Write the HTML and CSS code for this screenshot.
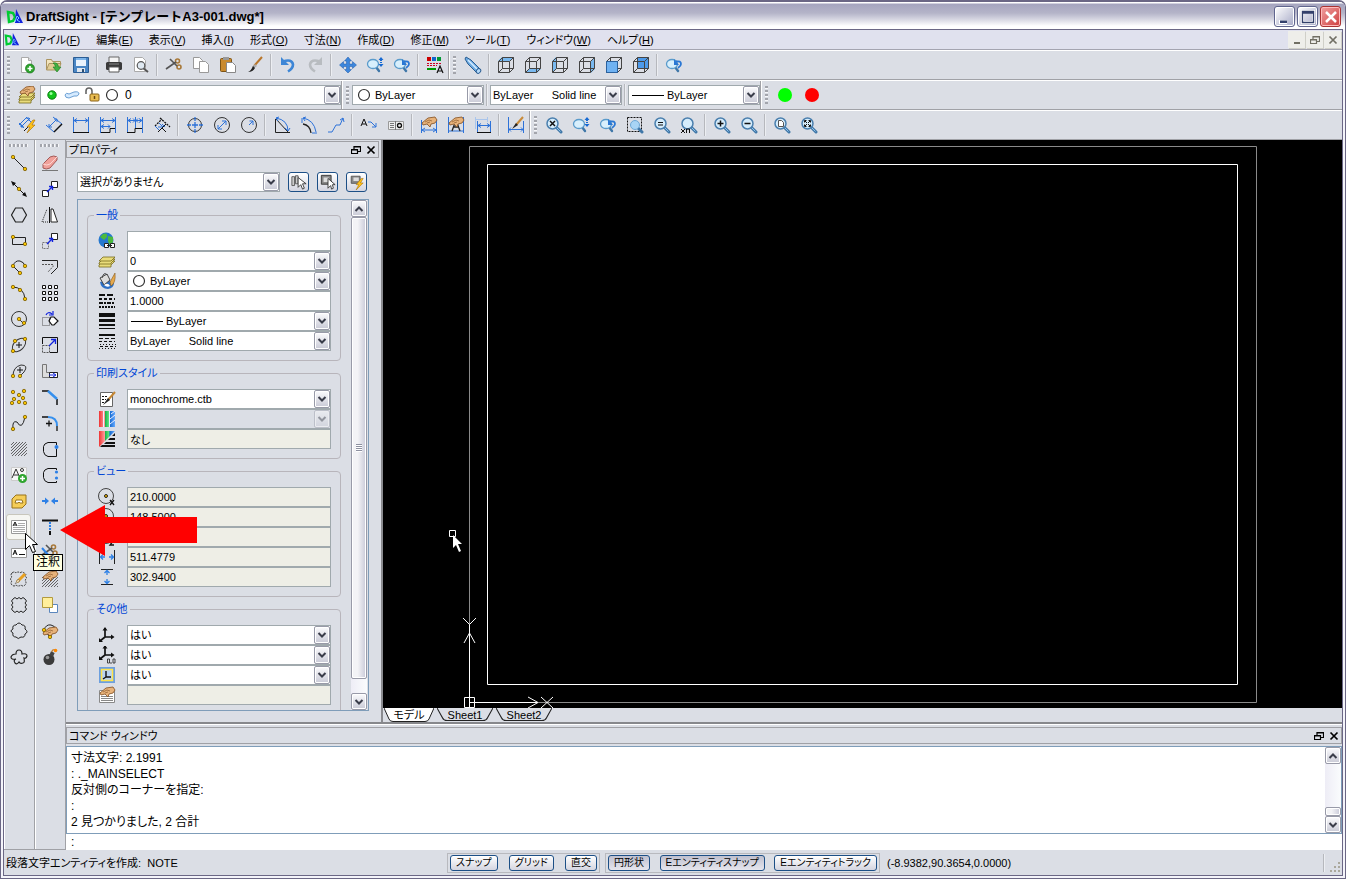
FILE: index.html
```html
<!DOCTYPE html>
<html lang="ja">
<head>
<meta charset="utf-8">
<title>DraftSight - [テンプレートA3-001.dwg*]</title>
<link rel="stylesheet" href="styles.css">
</head>
<body>
<svg class="sprite" aria-hidden="true">
<defs>
<pattern id="hatch" width="3" height="3" patternUnits="userSpaceOnUse"><path d="M0 3L3 0M-1 1L1 -1M2 4L4 2" stroke="#444" stroke-width=".8"/></pattern>
<linearGradient id="rainbow"><stop offset="0" stop-color="#e33"/><stop offset=".35" stop-color="#f99"/><stop offset=".36" stop-color="#1a4"/><stop offset=".65" stop-color="#6e8"/><stop offset=".66" stop-color="#16c"/><stop offset="1" stop-color="#6af"/></linearGradient>
<circle id="yd" r="1.7" fill="#f8c400" stroke="#7a5c00" stroke-width=".8"/>
<g id="mag"><path d="M11 11l5 5" stroke="#3f77a8" stroke-width="3" stroke-linecap="round"/><path d="M11.5 11.5l4 4" stroke="#8fc3ea" stroke-width="1"/><circle cx="7.5" cy="7.5" r="5.5" fill="#d5ecfb" stroke="#4a7fae" stroke-width="1.5"/></g>
<g id="magsmall"><path d="M10 11l3 4" stroke="#3f77a8" stroke-width="2.4" stroke-linecap="round"/><ellipse cx="7" cy="8" rx="5.500" ry="4.500" fill="#d8effc" stroke="#5a9bcb" stroke-width="1.3"/></g>
<g id="cube" fill="none" stroke="#444"><path d="M1.500 5.500h11v11h-11zM5.500 1.500h11v11h-11zM1.500 5.500l4-4M12.500 5.500l4-4M12.500 16.500l4-4M1.500 16.500l4-4"/></g>
<g id="hand"><path d="M2 8l6-5 7-1 2 3-2 3-4 1-1 3-3-3-4 1z" fill="#e7b27a" stroke="#8c5a2c" stroke-width=".9"/><path d="M5 7l4-2 3 1M7 8l3-1" stroke="#8c5a2c" stroke-width=".7" fill="none"/></g>
<g id="scis"><circle cx="12.500" cy="5" r="2" fill="none" stroke="#a87838" stroke-width="1.600"/><circle cx="14" cy="11" r="2" fill="none" stroke="#a87838" stroke-width="1.600"/><path d="M11 6L1 13M12 10L5 3" stroke="#555" stroke-width="1.600"/></g>
<path id="bolt" d="M14 3L8 10h3l-3 6 8-8h-3l3-5z" fill="#ffc21a" stroke="#a36a00" stroke-width=".6"/>
<g id="axes" fill="none" stroke="#111" stroke-width="1.700"><path d="M7 2v9h8M7 11l-5 4"/><path d="M4.500 4.500L7 1l2.500 3.500zM13 8.500l3.500 2.500-3.500 2.500zM1 12v4h4z" fill="#111" stroke="none"/></g>
<symbol id="logo" viewBox="0 0 18 18"><path d="M2 4l5 1 2 4-2 4-4 1z" fill="none" stroke="#0c3" stroke-width="2.500"/><path d="M10 1l7 14H9z" fill="#12d"/><path d="M9 14l2-6 2 2-2 2 3 2" stroke="#7cf" fill="none"/></symbol>
<symbol id="new" viewBox="0 0 18 18"><path d="M3.500 1.500h7l3 3v12h-10z" fill="#fff" stroke="#aaa"/><path d="M10.500 1.500v3h3" fill="#ddd" stroke="#aaa"/><circle cx="12" cy="12.500" r="4.500" fill="#2fa52f" stroke="#17761a" stroke-width=".7"/><path d="M12 10v5M9.500 12.500h5" stroke="#fff" stroke-width="1.600"/></symbol>
<symbol id="open" viewBox="0 0 18 18"><path d="M1.500 14V3.500h5l1 2h8v3" fill="#f2e4bd" stroke="#ab9460"/><path d="M1.500 14L4 7.500h12L13.500 14z" fill="#e2cd95" stroke="#ab9460"/><path d="M8 7q5-1 5.500 4h2.500l-4 5-4-5h2.500q-.5-3-2.500-4z" fill="#43b243" stroke="#1b7a1e" stroke-width=".6"/></symbol>
<symbol id="save" viewBox="0 0 18 18"><path d="M1.500 1.500h15v15h-15z" fill="#4a86c4" stroke="#2b5d94"/><path d="M4 2h10v8H4z" fill="#eaf3fc"/><path d="M4 2h10v2H4z" fill="#7db5ea"/><path d="M5 12h8v4H5z" fill="#dfe6ee"/><path d="M10 13h2v3h-2z" fill="#2f4f70"/></symbol>
<symbol id="print" viewBox="0 0 18 18"><path d="M4 1h10v6H4z" fill="#f4f4f4" stroke="#666"/><rect x="1" y="6" width="16" height="8" rx="1.500" fill="#3a3a3a"/><path d="M4 8h10" stroke="#888"/><path d="M4 11h10v5H4z" fill="#fff" stroke="#555"/></symbol>
<symbol id="preview" viewBox="0 0 18 18"><path d="M2.500 1.500h8l3 3v11h-11z" fill="#fff" stroke="#aaa"/><path d="M11 12l5 4" stroke="#555" stroke-width="2"/><circle cx="9" cy="9.500" r="3.800" fill="#dfe9f2" stroke="#555" stroke-width="1.200"/></symbol>
<symbol id="cut" viewBox="0 0 18 18"><use href="#scis"/></symbol>
<symbol id="copy" viewBox="0 0 18 18"><g fill="#fff" stroke="#999"><path d="M1.500 1.500h6l3 3v8h-9z"/><path d="M7.500 5.500h6l3 3v8h-9z"/></g></symbol>
<symbol id="paste" viewBox="0 0 18 18"><rect x="1.500" y="2.500" width="11" height="13" rx="1" fill="#c98a2e" stroke="#7c5315"/><path d="M4 1h6v3H4z" fill="#999"/><path d="M7.500 6.500h6l3 3v7h-9z" fill="#fff" stroke="#888"/></symbol>
<symbol id="brush" viewBox="0 0 18 18"><path d="M16 1L8 10" stroke="#b9762a" stroke-width="2"/><path d="M9 8l-3 3 1 2 4-3z" fill="#aaa"/><path d="M7 10l2 2q-2 4-7 4 3-1 5-6z" fill="#222"/></symbol>
<symbol id="undo" viewBox="0 0 18 18"><path d="M4 5.500q9-3 10 3 0 4-5 7" fill="none" stroke="#3d86d6" stroke-width="2.600"/><path d="M2 1v8h8z" fill="#3d86d6"/></symbol>
<symbol id="redo" viewBox="0 0 18 18"><path d="M14 5.500q-9-3-10 3 0 4 5 7" fill="none" stroke="#b8bcc0" stroke-width="2.600"/><path d="M16 1v8H8z" fill="#b8bcc0"/></symbol>
<symbol id="pan" viewBox="0 0 18 18"><path d="M9 1l3.500 4h-2v3h3V5.500L17.500 9l-4 3.500v-2h-3v3h2L9 17l-3.500-3.500h2v-3h-3v2L.5 9l4-3.500V8h3V5h-2z" fill="#3c86dc" stroke="#1c58a8" stroke-width=".5"/></symbol>
<symbol id="zdyn" viewBox="0 0 18 18"><use href="#magsmall"/><path d="M15 1l2.500 3h-5zM15 11l2.500-3h-5z" fill="#1769d2"/><path d="M15 4v4" stroke="#1769d2" stroke-dasharray="1 1" stroke-width="2"/></symbol>
<symbol id="zprev" viewBox="0 0 18 18"><use href="#magsmall"/><path d="M11 5.500q5-1 5 2.500 0 2-3 4" fill="none" stroke="#2a77d4" stroke-width="1.800"/><path d="M9 3v6h5z" fill="#2a77d4"/></symbol>
<symbol id="fmt" viewBox="0 0 18 18"><path d="M1 1h4v4H1z" fill="#c00"/><path d="M6 1h4v4H6z" fill="#16c"/><path d="M11 1h4v4h-4z" fill="#093"/><path d="M1 7.500h14M1 9.500h10" stroke="#c02" stroke-dasharray="2 1"/><path d="M1 13h9" stroke="#090" stroke-width="2"/><path d="M11 17l3-7 3 7M12 15h4" fill="none" stroke="#111" stroke-width="1.200"/></symbol>
<symbol id="scope" viewBox="0 0 18 18"><path d="M2 1l5 3 9 9-3 4-9-9-3-5z" fill="#6cabe2" stroke="#2a5d92"/><path d="M4 4l9 9" stroke="#d6ecff" stroke-width="1.500"/><ellipse cx="14.500" cy="15" rx="2" ry="2.500" fill="#b5dafa" stroke="#2a5d92" transform="rotate(40 14.500 15)"/></symbol>
<symbol id="c1" viewBox="0 0 18 18"><path d="M1 5l4-4h12l-4 4z" fill="#79b9f0"/><use href="#cube"/></symbol>
<symbol id="c2" viewBox="0 0 18 18"><path d="M1 17l4-4h12l-4 4z" fill="#79b9f0"/><use href="#cube"/></symbol>
<symbol id="c3" viewBox="0 0 18 18"><path d="M1 5l4-4v12l-4 4z" fill="#79b9f0"/><use href="#cube"/></symbol>
<symbol id="c4" viewBox="0 0 18 18"><path d="M13 5l4-4v12l-4 4z" fill="#79b9f0"/><use href="#cube"/></symbol>
<symbol id="c5" viewBox="0 0 18 18"><use href="#cube"/><path d="M1.500 5.500h11v11h-11z" fill="#6fb2f2" stroke="#2a62a0"/></symbol>
<symbol id="c6" viewBox="0 0 18 18"><path d="M5 1h12v12H5z" fill="#4d9aea"/><use href="#cube"/></symbol>
<symbol id="layers" viewBox="0 0 18 18"><g fill="#e9dc7c" stroke="#776a1c" stroke-width=".8"><path d="M1 15l4-4h12l-4 4v2H1z"/><path d="M1 13l4-4h12l-4 4v1H1z"/><path d="M1 11l4-4h12l-4 4z"/></g></symbol>
<symbol id="layman" viewBox="0 0 18 18"><use href="#layers"/><use href="#hand" y="-2"/></symbol>
<symbol id="layer3" viewBox="0 0 18 18"><use href="#layers" y="-2"/></symbol>
<symbol id="green" viewBox="0 0 18 18"><circle cx="9" cy="9" r="4.200" fill="#11c51a" stroke="#0a7d10"/><circle cx="8" cy="7.500" r="1.500" fill="#9f9"/></symbol>
<symbol id="cloud" viewBox="0 0 18 18"><path d="M2 9q1-3 4-1l5-2q5-1 5 2-1 3-5 2l-5 2q-4 0-4-3z" fill="#d6ebff" stroke="#6da0d4"/></symbol>
<symbol id="lock" viewBox="0 0 18 18"><path d="M3 8V5q0-3 3-3t3 3v4" fill="none" stroke="#666" stroke-width="1.600"/><rect x="7" y="8" width="9" height="7" rx="1" fill="#e9bd52" stroke="#8b641a"/><path d="M11.500 10v3" stroke="#6b4912" stroke-width="1.500"/></symbol>
<symbol id="ring" viewBox="0 0 18 18"><circle cx="9" cy="9" r="5.500" fill="#fff" stroke="#333" stroke-width="1.200"/></symbol>
<symbol id="g" viewBox="0 0 18 18"><circle cx="9" cy="9" r="7" fill="#0f0"/></symbol>
<symbol id="r" viewBox="0 0 18 18"><circle cx="9" cy="9" r="7" fill="#f00"/></symbol>
<g id="dh" fill="none" stroke="#2d72d9"><path d="M1.500 1v16M16.500 1v16M2 4.500h14M5 2.500l-3 2 3 2M13 2.500l3 2-3 2"/></g>
<symbol id="d1" viewBox="0 0 18 18"><path d="M1 9l8-8M3 11L12 2M1 7l5 5M8 1l5 5M3 8v3h3M8 2h3v3" fill="none" stroke="#2d72d9"/><path d="M6 15l4-4" stroke="#111"/><use href="#bolt" x="1" y="1"/></symbol>
<symbol id="d2" viewBox="0 0 18 18"><path d="M1 9l8 7M8 1l9 7M4 11l8-8M4 8v3h3M9 3h3v3" fill="none" stroke="#2d72d9"/><path d="M9 16l8-8" stroke="#111" stroke-width="1.500"/></symbol>
<symbol id="d3" viewBox="0 0 18 18"><use href="#dh"/><path d="M1 16.500h16" stroke="#111"/></symbol>
<symbol id="d4" viewBox="0 0 18 18"><use href="#dh"/><path d="M2 10.500h9M5 8.500l-3 2 3 2M9 8.500l2 2-2 2" stroke="#2d72d9" fill="none"/><path d="M2 16.500h9v-4h5" stroke="#111" fill="none"/></symbol>
<symbol id="d5" viewBox="0 0 18 18"><use href="#dh"/><path d="M9.500 1v12M7 2.500l2 2-2 2M12 2.500l-2 2 2 2" stroke="#2d72d9" fill="none"/><path d="M1 16.500h8v-4h7" stroke="#111" fill="none"/></symbol>
<symbol id="d6" viewBox="0 0 18 18"><path d="M2 10l7-7M7 2l10 9" fill="none" stroke="#111" stroke-width="1.300" stroke-dasharray="2 1"/><path d="M2 10l4 4M6 7l4 4M5 11h4M9 8l3 3" fill="none" stroke="#2d72d9"/><path d="M5 16l4-4 4 4M9 12l4-4" stroke="#111" fill="none"/></symbol>
<symbol id="d7" viewBox="0 0 18 18"><circle cx="9" cy="9" r="6.500" fill="none" stroke="#333"/><path d="M9 1v4M9 13v4M1 9h4M13 9h4M6 9h6M9 6v6" stroke="#2d72d9" stroke-width="1.300"/></symbol>
<symbol id="d8" viewBox="0 0 18 18"><circle cx="9" cy="9" r="7.500" fill="none" stroke="#333"/><path d="M5 13l8-8M5 9v4h4M9 5h4v4" stroke="#2d72d9" fill="none"/></symbol>
<symbol id="d9" viewBox="0 0 18 18"><circle cx="9" cy="9" r="7.500" fill="none" stroke="#333"/><path d="M9 9l4-4M9.500 5H13v4" stroke="#2d72d9" fill="none"/></symbol>
<symbol id="d10" viewBox="0 0 18 18"><path d="M2.500 3v13.500H17M3 3l12 13" fill="none" stroke="#222"/><path d="M3 2q12 2 12 13M6 1L3 2l2 3M12 12l3 3 2-3" fill="none" stroke="#2d72d9"/></symbol>
<symbol id="d11" viewBox="0 0 18 18"><path d="M3 8q7 1 8 9" fill="none" stroke="#222" stroke-width="1.300"/><path d="M2 7V2M12 17h5M3 2q11 2 13 14M6 1L3 2l2 3" fill="none" stroke="#2d72d9"/></symbol>
<symbol id="d12" viewBox="0 0 18 18"><path d="M1 16h4l4-7h4l3-7M13 4l3-2 1 4" fill="none" stroke="#2d72d9"/></symbol>
<symbol id="d13" viewBox="0 0 18 18"><path d="M1 10l3-7 3 7M2 8h4" fill="none" stroke="#111"/><path d="M8 6h3l5 5M16 7v4h-4" fill="none" stroke="#2d72d9"/></symbol>
<symbol id="d14" viewBox="0 0 18 18"><path d="M1.500 5.500h15v8h-15z" fill="#eee" stroke="#999"/><path d="M3 7.500h4M3 9.500h4M3 11.500h4M8.500 5v9" stroke="#777"/><circle cx="12.500" cy="9.500" r="2" fill="none" stroke="#111" stroke-width="1.300"/></symbol>
<symbol id="d15" viewBox="0 0 18 18"><path d="M1.500 4v13M16.500 4v13M2 14h14M5 12l-3 2 3 2M13 12l3 2-3 2" fill="none" stroke="#2d72d9"/><use href="#hand" y="-1"/></symbol>
<symbol id="d16" viewBox="0 0 18 18"><path d="M1.500 1v16M16.500 1v16M2 15h14" fill="none" stroke="#2d72d9"/><path d="M5 15l4-11 4 11M6 11h6" fill="none" stroke="#222" stroke-width="1.300"/><use href="#hand" y="-1"/></symbol>
<symbol id="d17" viewBox="0 0 18 18"><path d="M1.500 1v12M13.500 1v5M2 3.500h11" stroke="#a9c5ec"/><path d="M3.500 5v12M16.500 5v12M4 9.500h12M7 7.500l-3 2 3 2M13 7.500l3 2-3 2" fill="none" stroke="#2d72d9"/><path d="M3 16.500h14" stroke="#111"/></symbol>
<symbol id="d18" viewBox="0 0 18 18"><path d="M1.500 1v16M16.500 5v12M2 13.500h14M4 11.500l-2 2 2 2M14 11.500l2 2-2 2" fill="none" stroke="#2d72d9"/><path d="M16 1l-7 8" stroke="#c98b3a" stroke-width="2"/><path d="M9 7l2 2-6 4z" fill="#222"/></symbol>
<symbol id="z1" viewBox="0 0 18 18"><use href="#mag"/><path d="M5 5l5 5M10 5l-5 5" stroke="#111" stroke-width="1.500"/></symbol>
<symbol id="z2" viewBox="0 0 18 18"><path d="M1.500 1.500h14v14h-14z" fill="none" stroke="#111" stroke-dasharray="2 1"/><path d="M12 12l4 4" stroke="#3f77a8" stroke-width="3" stroke-linecap="round"/><circle cx="9" cy="9" r="4.500" fill="#a8d4f5" stroke="#6ea8d6"/></symbol>
<symbol id="z3" viewBox="0 0 18 18"><use href="#mag"/><path d="M5 6.500h5M5 9h5" stroke="#111" stroke-width="1.200"/></symbol>
<symbol id="z4" viewBox="0 0 18 18"><use href="#mag"/><path d="M1 13l4 4M5 13l-4 4M6.500 17v-4h3v4" fill="none" stroke="#111"/></symbol>
<symbol id="z5" viewBox="0 0 18 18"><use href="#mag"/><path d="M7.500 4.500v6M4.500 7.500h6" stroke="#111" stroke-width="1.500"/></symbol>
<symbol id="z6" viewBox="0 0 18 18"><use href="#mag"/><path d="M4.500 7.500h6" stroke="#111" stroke-width="1.500"/></symbol>
<symbol id="z7" viewBox="0 0 18 18"><use href="#mag"/><path d="M5.500 4.500h3l2 2v4h-5z" fill="#fff" stroke="#555"/></symbol>
<symbol id="z8" viewBox="0 0 18 18"><use href="#mag"/><path d="M4.500 6.500v-2h2M8.500 4.500h2v2M10.500 8.500v2h-2M6.500 10.500h-2v-2M5 5l2 2M10 5L8 7M5 10l2-2M10 10L8 8" fill="none" stroke="#111"/></symbol>
<symbol id="p1" viewBox="0 0 18 18"><path d="M3 3l12 12" stroke="#222"/><use href="#yd" x="3" y="3"/><use href="#yd" x="15" y="15"/></symbol>
<symbol id="p2" viewBox="0 0 18 18"><path d="M2 2l14 14" stroke="#111"/><path d="M1 1l5 2-3 3zM17 17l-5-2 3-3z" fill="#111"/><use href="#yd" x="9" y="9"/></symbol>
<symbol id="p3" viewBox="0 0 18 18"><path d="M5.500 2h7l4 7-4 7h-7l-4-7z" fill="none" stroke="#222" stroke-width="1.200"/></symbol>
<symbol id="p4" viewBox="0 0 18 18"><path d="M2.500 5.500h13v7h-13z" fill="none" stroke="#222"/><use href="#yd" x="3" y="5"/><use href="#yd" x="15" y="12"/></symbol>
<symbol id="p5" viewBox="0 0 18 18"><path d="M10 15L3 8q2-6 7-5 4 1 5 5" fill="none" stroke="#222"/><use href="#yd" x="3" y="8"/><use href="#yd" x="15" y="8"/><use href="#yd" x="10" y="15"/></symbol>
<symbol id="p6" viewBox="0 0 18 18"><path d="M2 3q12 0 13 12" fill="none" stroke="#222"/><use href="#yd" x="3" y="3"/><use href="#yd" x="10" y="6"/><use href="#yd" x="15" y="15"/></symbol>
<symbol id="p7" viewBox="0 0 18 18"><circle cx="9" cy="9" r="7.500" fill="none" stroke="#333"/><path d="M9 9l4 4" stroke="#333"/><use href="#yd" x="9" y="9"/><use href="#yd" x="14" y="13"/></symbol>
<symbol id="p8" viewBox="0 0 18 18"><ellipse cx="9" cy="9" rx="8" ry="5" fill="none" stroke="#333" transform="rotate(-45 9 9)"/><path d="M9 6v6M6 9h6" stroke="#111"/><use href="#yd" x="5" y="5"/><use href="#yd" x="15" y="3"/><use href="#yd" x="3" y="15"/></symbol>
<symbol id="p9" viewBox="0 0 18 18"><path d="M3 14Q3 5 11 3q8 0 3 7l-4 4" fill="none" stroke="#333"/><path d="M10 5v6M7 8h6" stroke="#111"/><use href="#yd" x="3" y="14"/><use href="#yd" x="10" y="14"/></symbol>
<symbol id="p10" viewBox="0 0 18 18"><use href="#yd" x="3" y="4"/><use href="#yd" x="9" y="7"/><use href="#yd" x="14" y="3"/><use href="#yd" x="4" y="11"/><use href="#yd" x="13" y="10"/><use href="#yd" x="2" y="15"/><use href="#yd" x="9" y="14"/><use href="#yd" x="15" y="15"/></symbol>
<symbol id="p11" viewBox="0 0 18 18"><path d="M3 15q-1-9 4-7 5 9 8-5" fill="none" stroke="#222"/><use href="#yd" x="3" y="15"/><use href="#yd" x="15" y="3"/></symbol>
<symbol id="p12" viewBox="0 0 18 18"><path d="M1 2h16v14H1z" fill="url(#hatch)"/></symbol>
<symbol id="p13" viewBox="0 0 18 18"><path d="M1.500 1.500h15v13h-15z" fill="#f7f7f7" stroke="#ccc"/><path d="M2 12L6 3l4 9M3.500 9h5" fill="none" stroke="#333"/><circle cx="12" cy="4" r="1.500" fill="none" stroke="#333"/><circle cx="12.500" cy="12.500" r="4.500" fill="#2fa52f"/><path d="M12.500 10v5M10 12.500h5" stroke="#fff" stroke-width="1.500"/></symbol>
<symbol id="p14" viewBox="0 0 18 18"><path d="M2 7l4-4h10v9l-4 4H2z" fill="#f5cd57" stroke="#98731a"/><path d="M5 11l1-3h6l1 3h-3l-1-1-1 1z" fill="#fff" stroke="#98731a"/></symbol>
<symbol id="p15" viewBox="0 0 18 18"><path d="M1.500 2.500h15v13h-15z" fill="#fff" stroke="#999"/><path d="M3 8l2-4 2 4M4 7h2" fill="none" stroke="#111"/><path d="M8 5.500h7M8 7.500h7M3 9.500h12M3 11.500h12M3 13.500h12" stroke="#aaa"/></symbol>
<symbol id="p16" viewBox="0 0 18 18"><path d="M1.500 4.500h15v9h-15z" fill="#fff" stroke="#999"/><path d="M3 11l2-5 2 5M4 9h2M9 10.500h6" fill="none" stroke="#111"/></symbol>
<symbol id="p17" viewBox="0 0 18 18"><path d="M2 3q2-2 4 0 2-2 4 0 2-2 4 0 3 1 1 3 3 2 0 4 2 3 0 5-2 2-4 0-3 2-5 0-2 2-4 0-2-2 0-4-3-2 0-4-2-2 0-4z" fill="none" stroke="#333" stroke-dasharray="2 1"/><path d="M15 4l-8 8" stroke="#e8a020" stroke-width="3"/><path d="M8 9l2 2-5 3z" fill="#f7deb0" stroke="#555" stroke-width=".5"/></symbol>
<symbol id="p18" viewBox="0 0 18 18"><path d="M3 3q2-3 4 0 2-3 4 0 2-3 4 0 3 2 0 4 3 2 0 4 3 2 0 4-2 3-4 0-2 3-4 0-2 3-4 0-3-2 0-4-3-2 0-4-3-2 0-4z" fill="none" stroke="#222"/></symbol>
<symbol id="p19" viewBox="0 0 18 18"><path d="M6 3q3-4 6 0 4 0 3 4 4 3 0 5 0 4-4 3-3 3-5 0-4 0-3-4-4-2 0-4-1-4 3-4z" fill="none" stroke="#222"/></symbol>
<symbol id="p20" viewBox="0 0 18 18"><path d="M6 6q0-4 3-4t3 4q5-1 5 2-1 3-3 2 1 5-1 5-3 1-4-1-2 3-4 1-2-3 1-4-5 1-5-2 1-3 5-3z" fill="none" stroke="#222" stroke-width="1.200"/></symbol>
<symbol id="m1" viewBox="0 0 18 18"><path d="M2 10l7-7q4-2 7 0v3l-7 8q-4 2-7 0z" fill="#f0a09a" stroke="#a35a58"/><path d="M2 10q4 2 7 0l7-7" fill="none" stroke="#fcd5d2"/><path d="M1 16.500h16" stroke="#777"/></symbol>
<symbol id="m2" viewBox="0 0 18 18"><path d="M1.500 10.500h6v6h-6zM10.500 1.500h6v6h-6z" fill="#fff" stroke="#222"/><path d="M6 12l5-5M8 6.500h3.500V10" stroke="#12d" stroke-width="1.400" fill="none"/></symbol>
<symbol id="m3" viewBox="0 0 18 18"><path d="M7 16H1L6 3" fill="none" stroke="#222" stroke-dasharray="1 1"/><path d="M10 16V3h2l4.500 13z" fill="#fff" stroke="#222"/><path d="M8.500 1v16" stroke="#111"/></symbol>
<symbol id="m4" viewBox="0 0 18 18"><path d="M1.500 10.500h6v6h-6z" fill="none" stroke="#777" stroke-dasharray="2 1"/><path d="M10.500 1.500h6v6h-6z" fill="#fff" stroke="#222"/><path d="M6 12l5-5M8 6.500h3.500V10" stroke="#12d" stroke-width="1.400" fill="none"/></symbol>
<symbol id="m5" viewBox="0 0 18 18"><path d="M1 2.500h15.500v7L10 16" fill="none" stroke="#222"/><path d="M1 6.500h11v2L7 14" fill="none" stroke="#555" stroke-dasharray="2 1"/></symbol>
<symbol id="m6" viewBox="0 0 18 18"><path d="M1.500 1.500h3v3h-3zM7.500 1.500h3v3h-3zM13.500 1.500h3v3h-3zM1.500 7.500h3v3h-3zM7.500 7.500h3v3h-3zM13.500 7.500h3v3h-3zM1.500 13.500h3v3h-3zM7.500 13.500h3v3h-3zM13.500 13.500h3v3h-3z" fill="#fff" stroke="#111"/></symbol>
<symbol id="m7" viewBox="0 0 18 18"><path d="M1.500 7.500h7v8h-7z" fill="none" stroke="#555" stroke-dasharray="1 1"/><path d="M10 7h3l4 4-4 4h-2l-3-4z" fill="#fff" stroke="#111" stroke-width="1.200"/><path d="M5 5q2-4 6-1M12 1v4H8" fill="none" stroke="#12d" stroke-width="1.200"/></symbol>
<symbol id="m8" viewBox="0 0 18 18"><path d="M1.500 8V1.500h15v15H9" fill="none" stroke="#111"/><path d="M1.500 9.500h7v7h-7z" fill="none" stroke="#555" stroke-dasharray="2 1"/><path d="M8 10l6-6M10 3.500h4.500V8" stroke="#12d" fill="none" stroke-width="1.300"/></symbol>
<symbol id="m9" viewBox="0 0 18 18"><path d="M1.500 2.500h4v8h11v5h-15z" fill="#ddd" stroke="#777"/><path d="M8.500 10.500h8v5h-8z" fill="#fff" stroke="#222"/><path d="M8 13h6M12 11l3 2-3 2" stroke="#12d" fill="none"/></symbol>
<symbol id="m10" viewBox="0 0 18 18"><path d="M1 3h7M16 11v6" stroke="#111" stroke-width="1.500"/><path d="M7 3l9 8" stroke="#3590ee" stroke-width="2.500"/></symbol>
<symbol id="m11" viewBox="0 0 18 18"><path d="M1 3h6M16 12v5M8 6.500v6M5 9.500h6" stroke="#111" stroke-width="1.300"/><path d="M7 3q9 0 9 9" stroke="#3590ee" stroke-width="2" fill="none"/></symbol>
<symbol id="m12" viewBox="0 0 18 18"><path d="M15.500 5V2.500H7q-4 1-4.500 4v5q.5 4 4.500 5h8.500V9" fill="none" stroke="#111"/><circle cx="15.500" cy="7" r="2" fill="#2d80e6"/></symbol>
<symbol id="m13" viewBox="0 0 18 18"><path d="M15.500 4V2.500H7q-4 1-4.500 4v5q.5 4 4.500 5h8.500V15" fill="none" stroke="#111"/><circle cx="15.500" cy="6" r="1.600" fill="#2d80e6"/><circle cx="15.500" cy="12" r="1.600" fill="#2d80e6"/></symbol>
<symbol id="m14" viewBox="0 0 18 18"><path d="M4 5.500L8 9l-4 3.500V10H1V8h3zM14 5.500L10 9l4 3.500V10h3V8h-3z" fill="#2d80e6"/></symbol>
<symbol id="m15" viewBox="0 0 18 18"><path d="M1 2.500h16M9 13v4" stroke="#111" stroke-width="2"/><path d="M9 4v9" stroke="#2d80e6" stroke-width="2" stroke-dasharray="2 1"/></symbol>
<symbol id="m16" viewBox="0 0 18 18"><use href="#scis" y="-2"/><path d="M1 4l8 9" stroke="#2d80e6" stroke-width="2"/></symbol>
<symbol id="m17" viewBox="0 0 18 18"><path d="M1 7h16v10H1z" fill="url(#hatch)"/><use href="#hand" y="-1"/></symbol>
<symbol id="m18" viewBox="0 0 18 18"><path d="M8.500 8.500h8v8h-8z" fill="#fff" stroke="#5b87bd"/><path d="M1.500 1.500h10v10h-10z" fill="#ffef9b" stroke="#b39a3e"/></symbol>
<symbol id="m19" viewBox="0 0 18 18"><path d="M9 15L3 8q2-6 7-5 4 1 5 4" fill="none" stroke="#222"/><use href="#hand" y="3"/><use href="#yd" x="3" y="8"/><use href="#yd" x="9" y="15"/></symbol>
<symbol id="m20" viewBox="0 0 18 18"><circle cx="8" cy="11.500" r="5.500" fill="#3b3b3b"/><circle cx="6.500" cy="9.500" r="1.800" fill="#999"/><path d="M9 4h4v4H9z" fill="#444" transform="rotate(25 11 6)"/><path d="M11 4q0-3 3-2" fill="none" stroke="#b77b34" stroke-width="1.200"/><circle cx="14.500" cy="2.500" r="1.800" fill="#f80"/></symbol>
<symbol id="a1" viewBox="0 0 18 18"><circle cx="8" cy="8" r="7.500" fill="#2678cf"/><path d="M5 2q5-2 4 3l-3 3-4-3zM10 4l5 1v5l-3 3q-3-4-2-9z" fill="#4cba3d"/><path d="M6.500 11.500h4v4h-4zM12.500 11.500h4v4h-4z" fill="#fff" stroke="#222"/><path d="M9 13.500h5" stroke="#222"/></symbol>
<symbol id="a2" viewBox="0 0 18 18"><path d="M2 10q1 7 8 7 6-1 6-6l-5-3z" fill="#2d6fc4"/><path d="M2 6l7-4 3 6-6 5z" fill="#ddd" stroke="#444"/><path d="M4 6q2-7 5-3" fill="none" stroke="#444"/><path d="M17 1l-5 9 1 4q5-3 4-13z" fill="#e6a94c" stroke="#86591c" stroke-width=".6"/><path d="M6 13q4-3 6 1-3 2-6-1z" fill="#fff"/></symbol>
<symbol id="a3" viewBox="0 0 18 18"><path d="M1 3h16" stroke="#111" stroke-width="2" stroke-dasharray="6 2"/><path d="M1 7h16" stroke="#111" stroke-width="2" stroke-dasharray="3 2"/><path d="M1 11h16" stroke="#111" stroke-width="2" stroke-dasharray="4 1 2 1"/><path d="M1 15h16" stroke="#111" stroke-width="2" stroke-dasharray="2 1"/></symbol>
<symbol id="a4" viewBox="0 0 18 18"><path d="M1 1h16v4H1zM1 7h16v3H1zM1 12h16v2H1zM1 16h16v1H1z" fill="#111"/></symbol>
<symbol id="a5" viewBox="0 0 18 18"><path d="M1 3h16" stroke="#111" stroke-width="2"/><path d="M1 6.500h16" stroke="#111" stroke-dasharray="4 2"/><path d="M1 9.500h16M2 14.500h16" stroke="#111" stroke-dasharray="3 2"/><path d="M2 12.500h16M1 16.500h16" stroke="#111" stroke-dasharray="1 2"/></symbol>
<symbol id="b1" viewBox="0 0 18 18"><path d="M2.500 2.500h12v14h-12z" fill="#fff" stroke="#666"/><path d="M4 6.500h6M4 9.500h4M4 12.500h4" stroke="#111" stroke-dasharray="2 1"/><path d="M17 2l-7 8" stroke="#c48633" stroke-width="2"/><path d="M10 8l2 2-7 5z" fill="#222"/></symbol>
<symbol id="b2" viewBox="0 0 18 18"><path d="M1 1h16v16H1z" fill="url(#rainbow)"/><path d="M5.500 1v16M11.500 1v16M13 4l4-3M12 9l5-4M12 14l5-4" stroke="#eef"/></symbol>
<symbol id="b3" viewBox="0 0 18 18"><path d="M1 1h16L1 17z" fill="url(#rainbow)"/><path d="M17 3v3h-3zM12 8h5v2h-7zM8 12h9v2H6zM4 15h13v2H2z" fill="#111"/></symbol>
<symbol id="v0" viewBox="0 0 18 18"><circle cx="8" cy="8" r="7.500" fill="none" stroke="#444"/><circle cx="8" cy="8" r="1.500" fill="#f7b900" stroke="#222"/></symbol>
<symbol id="v1" viewBox="0 0 18 18"><use href="#v0"/><path d="M12 12l4 5M16 12l-4 5" stroke="#111" stroke-width="1.300"/></symbol>
<symbol id="v3" viewBox="0 0 18 18"><use href="#v0"/><path d="M12 12h4l-4 5h4" fill="none" stroke="#111" stroke-width="1.300"/></symbol>
<symbol id="v4" viewBox="0 0 18 18"><path d="M1.500 2v14M16.500 2v14" stroke="#222"/><path d="M3 9h4M11 9h4M5 6.500L2.500 9 5 11.500M13 6.500L15.500 9 13 11.500" fill="none" stroke="#2d80e6" stroke-width="1.300"/></symbol>
<symbol id="v5" viewBox="0 0 18 18"><path d="M3 1.500h12M3 16.500h12" stroke="#222"/><path d="M9 3v4M9 11v4M6.500 5L9 2.500 11.500 5M6.500 13L9 15.500l2.500-2.500" fill="none" stroke="#2d80e6" stroke-width="1.300"/></symbol>
<symbol id="o1" viewBox="0 0 18 18"><use href="#axes"/></symbol>
<symbol id="o2" viewBox="0 0 18 18"><use href="#axes" y="-2"/><path d="M9.500 13h2v4h-2zM15 13h2v4h-2zM13 16v2" fill="none" stroke="#333" stroke-width=".9"/></symbol>
<symbol id="o3" viewBox="0 0 18 18"><path d="M1 1h16v16H1z" fill="#6c9fdf"/><path d="M3.500 3.500h11v11h-11z" fill="#b8d3f4" stroke="#ffe44c" stroke-width="1.500"/><path d="M8 5v6h5M8 11l-3 2" stroke="#111" stroke-width="1.400" fill="none"/></symbol>
<symbol id="o4" viewBox="0 0 18 18"><path d="M1.500 4.500h15v12h-15z" fill="#fff" stroke="#888"/><path d="M3 10.500h12M3 12.500h12M3 14.500h12" stroke="#888"/><use href="#hand" y="-1"/></symbol>
<symbol id="q1" viewBox="0 0 18 18"><path d="M1 3h3v10H1zM5 2h3v9H5z" fill="#ccc" stroke="#555"/><path d="M8 4v11l3-3 2 5 2-1-2-5h4z" fill="#fff" stroke="#333"/></symbol>
<symbol id="q2" viewBox="0 0 18 18"><path d="M1.500 1.500h11v10h-11z" fill="#888" stroke="#333"/><path d="M4 4h6v5H4z" fill="#ddd"/><path d="M9 5v11l3-3 1 4 2-1-1-4h3z" fill="#fff" stroke="#333"/></symbol>
<symbol id="q3" viewBox="0 0 18 18"><path d="M2.500 2.500h10v8h-10z" fill="#888" stroke="#555"/><path d="M5 4h6v4H5z" fill="#ddd"/><use href="#bolt" x="0" y="2"/></symbol>
<symbol id="chev" viewBox="0 0 10 10"><path d="M1.500 3L5 6.500 8.500 3" fill="none" stroke="#3a3d4a" stroke-width="2"/></symbol>
<symbol id="chevup" viewBox="0 0 10 10"><path d="M1.500 7L5 3.500 8.500 7" fill="none" stroke="#3a3d4a" stroke-width="2"/></symbol>
<symbol id="wmin" viewBox="0 0 18 18"><path d="M3 12h8v4H3z" fill="#fff"/><path d="M4 12.500h7v2.500H4z" fill="#33406b"/></symbol>
<symbol id="wmax" viewBox="0 0 18 18"><path d="M3.500 3.500h11v11h-11z" fill="none" stroke="#fff" stroke-width="3"/><path d="M3.500 3.500h11v11h-11zM3 5h12" fill="none" stroke="#33406b" stroke-width="1.400"/></symbol>
<symbol id="wclose" viewBox="0 0 18 18"><path d="M4 4l10 10M14 4L4 14" stroke="#fff" stroke-width="2.500"/></symbol>
<symbol id="nmin" viewBox="0 0 10 10"><path d="M2 8h6" stroke="currentColor" stroke-width="2"/></symbol>
<symbol id="nres" viewBox="0 0 10 10"><path d="M.5 4.500h6v4h-6zM.5 5h6M3 4V1.500h6.500v5H7M3 2h6.500" fill="none" stroke="currentColor" stroke-width="1.200"/></symbol>
<symbol id="nx" viewBox="0 0 10 10"><path d="M1.500 1.500l7 7M8.500 1.500l-7 7" stroke="currentColor" stroke-width="1.700"/></symbol>
</defs>
</svg>

<div class="window">
  <header class="titlebar">
    <svg class="ic"><use href="#logo"/></svg>
    <h1 class="title">DraftSight - [テンプレートA3-001.dwg*]</h1>
    <button class="win-btn" aria-label="最小化"><svg class="ic"><use href="#wmin"/></svg></button>
    <button class="win-btn" aria-label="最大化"><svg class="ic"><use href="#wmax"/></svg></button>
    <button class="win-btn win-close" aria-label="閉じる"><svg class="ic"><use href="#wclose"/></svg></button>
  </header>

  <div class="frame">
    <nav class="menubar" aria-label="メニュー">
      <svg class="ic menu-logo"><use href="#logo"/></svg>
      <button class="menu">ファイル(<u>F</u>)</button>
      <button class="menu">編集(<u>E</u>)</button>
      <button class="menu">表示(<u>V</u>)</button>
      <button class="menu">挿入(<u>I</u>)</button>
      <button class="menu">形式(<u>O</u>)</button>
      <button class="menu">寸法(<u>N</u>)</button>
      <button class="menu">作成(<u>D</u>)</button>
      <button class="menu">修正(<u>M</u>)</button>
      <button class="menu">ツール(<u>T</u>)</button>
      <button class="menu">ウィンドウ(<u>W</u>)</button>
      <button class="menu">ヘルプ(<u>H</u>)</button>
      <span class="spacer"></span>
      <button class="mdi-btn" aria-label="ドキュメントを最小化"><svg class="sm"><use href="#nmin"/></svg></button>
      <button class="mdi-btn" aria-label="元に戻す (縮小)"><svg class="sm"><use href="#nres"/></svg></button>
      <button class="mdi-btn" aria-label="ドキュメントを閉じる"><svg class="sm"><use href="#nx"/></svg></button>
    </nav>

    <div class="toolrow">
      <div class="toolbar"><i class="grip"></i>
        <button class="tool" aria-label="新規"><svg class="ic"><use href="#new"/></svg></button>
        <button class="tool" aria-label="開く"><svg class="ic"><use href="#open"/></svg></button>
        <button class="tool" aria-label="保存"><svg class="ic"><use href="#save"/></svg></button><i class="sep"></i>
        <button class="tool" aria-label="印刷"><svg class="ic"><use href="#print"/></svg></button>
        <button class="tool" aria-label="印刷プレビュー"><svg class="ic"><use href="#preview"/></svg></button><i class="sep"></i>
        <button class="tool" aria-label="切り取り"><svg class="ic"><use href="#cut"/></svg></button>
        <button class="tool" aria-label="コピー"><svg class="ic"><use href="#copy"/></svg></button>
        <button class="tool" aria-label="貼り付け"><svg class="ic"><use href="#paste"/></svg></button>
        <button class="tool" aria-label="プロパティペインター"><svg class="ic"><use href="#brush"/></svg></button><i class="sep"></i>
        <button class="tool" aria-label="元に戻す"><svg class="ic"><use href="#undo"/></svg></button>
        <button class="tool" aria-label="やり直し"><svg class="ic"><use href="#redo"/></svg></button><i class="sep"></i>
        <button class="tool" aria-label="画面移動"><svg class="ic"><use href="#pan"/></svg></button>
        <button class="tool" aria-label="ダイナミックズーム"><svg class="ic"><use href="#zdyn"/></svg></button>
        <button class="tool" aria-label="前のズーム"><svg class="ic"><use href="#zprev"/></svg></button><i class="sep"></i>
        <button class="tool" aria-label="プロパティ"><svg class="ic"><use href="#fmt"/></svg></button>
      </div>
      <div class="toolbar"><i class="grip"></i>
        <button class="tool" aria-label="名前の付いたビュー"><svg class="ic"><use href="#scope"/></svg></button><i class="sep"></i>
        <button class="tool" aria-label="上"><svg class="ic"><use href="#c1"/></svg></button>
        <button class="tool" aria-label="下"><svg class="ic"><use href="#c2"/></svg></button>
        <button class="tool" aria-label="左"><svg class="ic"><use href="#c3"/></svg></button>
        <button class="tool" aria-label="右"><svg class="ic"><use href="#c4"/></svg></button>
        <button class="tool" aria-label="前"><svg class="ic"><use href="#c5"/></svg></button>
        <button class="tool" aria-label="後"><svg class="ic"><use href="#c6"/></svg></button><i class="sep"></i>
        <button class="tool" aria-label="前のビュー"><svg class="ic"><use href="#zprev"/></svg></button>
      </div>
    </div>

    <div class="toolrow">
      <div class="toolbar"><i class="grip"></i>
        <button class="tool" aria-label="画層マネージャー"><svg class="ic"><use href="#layman"/></svg></button>
        <div class="combo combo-layer">
          <svg class="ic"><use href="#green"/></svg><svg class="ic"><use href="#cloud"/></svg><svg class="ic"><use href="#lock"/></svg><svg class="ic"><use href="#ring"/></svg>
          <select aria-label="画層"><option>0</option></select><span class="drop"><svg class="sm"><use href="#chev"/></svg></span>
        </div>
      </div>
      <div class="toolbar"><i class="grip"></i>
        <div class="combo combo-style"><svg class="ic"><use href="#ring"/></svg><select aria-label="線の色"><option>ByLayer</option></select><span class="drop"><svg class="sm"><use href="#chev"/></svg></span></div><i class="sep"></i>
        <div class="combo combo-style"><select aria-label="線種"><option>ByLayer&nbsp;&nbsp;&nbsp;&nbsp;&nbsp; Solid line</option></select><span class="drop"><svg class="sm"><use href="#chev"/></svg></span></div><i class="sep"></i>
        <div class="combo combo-style"><i class="stroke"></i><select aria-label="線の太さ"><option>ByLayer</option></select><span class="drop"><svg class="sm"><use href="#chev"/></svg></span></div>
      </div>
      <div class="toolbar"><i class="grip"></i>
        <button class="tool" aria-label="記録開始"><svg class="ic"><use href="#g"/></svg></button>
        <button class="tool" aria-label="記録停止"><svg class="ic"><use href="#r"/></svg></button>
      </div>
    </div>

    <div class="toolrow">
      <div class="toolbar"><i class="grip"></i>
        <button class="tool" aria-label="スマート寸法"><svg class="ic"><use href="#d1"/></svg></button>
        <button class="tool" aria-label="平行寸法"><svg class="ic"><use href="#d2"/></svg></button>
        <button class="tool" aria-label="長さ寸法"><svg class="ic"><use href="#d3"/></svg></button>
        <button class="tool" aria-label="並列寸法"><svg class="ic"><use href="#d4"/></svg></button>
        <button class="tool" aria-label="直列寸法"><svg class="ic"><use href="#d5"/></svg></button>
        <button class="tool" aria-label="座標寸法"><svg class="ic"><use href="#d6"/></svg></button><i class="sep"></i>
        <button class="tool" aria-label="中心マーク"><svg class="ic"><use href="#d7"/></svg></button>
        <button class="tool" aria-label="直径寸法"><svg class="ic"><use href="#d8"/></svg></button>
        <button class="tool" aria-label="半径寸法"><svg class="ic"><use href="#d9"/></svg></button><i class="sep"></i>
        <button class="tool" aria-label="角度寸法"><svg class="ic"><use href="#d10"/></svg></button>
        <button class="tool" aria-label="弧長寸法"><svg class="ic"><use href="#d11"/></svg></button>
        <button class="tool" aria-label="折り曲げ寸法"><svg class="ic"><use href="#d12"/></svg></button><i class="sep"></i>
        <button class="tool" aria-label="引出線"><svg class="ic"><use href="#d13"/></svg></button>
        <button class="tool" aria-label="幾何公差"><svg class="ic"><use href="#d14"/></svg></button><i class="sep"></i>
        <button class="tool" aria-label="寸法編集"><svg class="ic"><use href="#d15"/></svg></button>
        <button class="tool" aria-label="寸法文字編集"><svg class="ic"><use href="#d16"/></svg></button>
        <button class="tool" aria-label="寸法更新"><svg class="ic"><use href="#d17"/></svg></button><i class="sep"></i>
        <button class="tool" aria-label="寸法スタイル"><svg class="ic"><use href="#d18"/></svg></button>
      </div>
      <div class="toolbar"><i class="grip"></i>
        <button class="tool" aria-label="中心ズーム"><svg class="ic"><use href="#z1"/></svg></button>
        <button class="tool" aria-label="ズーム"><svg class="ic"><use href="#zdyn"/></svg></button>
        <button class="tool" aria-label="前画面ズーム"><svg class="ic"><use href="#zprev"/></svg></button>
        <button class="tool" aria-label="窓ズーム"><svg class="ic"><use href="#z2"/></svg></button>
        <button class="tool" aria-label="倍率ズーム"><svg class="ic"><use href="#z3"/></svg></button>
        <button class="tool" aria-label="スケールズーム"><svg class="ic"><use href="#z4"/></svg></button><i class="sep"></i>
        <button class="tool" aria-label="拡大"><svg class="ic"><use href="#z5"/></svg></button>
        <button class="tool" aria-label="縮小"><svg class="ic"><use href="#z6"/></svg></button><i class="sep"></i>
        <button class="tool" aria-label="図面範囲"><svg class="ic"><use href="#z7"/></svg></button>
        <button class="tool" aria-label="フィット"><svg class="ic"><use href="#z8"/></svg></button>
      </div>
    </div>

    <main class="workspace">
      <div class="palette"><i class="vgrip"></i>
        <button class="tool" aria-label="線分"><svg class="ic"><use href="#p1"/></svg></button>
        <button class="tool" aria-label="無限直線"><svg class="ic"><use href="#p2"/></svg></button>
        <button class="tool" aria-label="多角形"><svg class="ic"><use href="#p3"/></svg></button>
        <button class="tool" aria-label="長方形"><svg class="ic"><use href="#p4"/></svg></button>
        <button class="tool" aria-label="ポリライン"><svg class="ic"><use href="#p5"/></svg></button>
        <button class="tool" aria-label="円弧"><svg class="ic"><use href="#p6"/></svg></button>
        <button class="tool" aria-label="円"><svg class="ic"><use href="#p7"/></svg></button>
        <button class="tool" aria-label="楕円"><svg class="ic"><use href="#p8"/></svg></button>
        <button class="tool" aria-label="楕円弧"><svg class="ic"><use href="#p9"/></svg></button>
        <button class="tool" aria-label="点"><svg class="ic"><use href="#p10"/></svg></button>
        <button class="tool" aria-label="スプライン"><svg class="ic"><use href="#p11"/></svg></button>
        <button class="tool" aria-label="ハッチング"><svg class="ic"><use href="#p12"/></svg></button>
        <button class="tool" aria-label="ブロック作成"><svg class="ic"><use href="#p13"/></svg></button>
        <button class="tool" aria-label="リージョン"><svg class="ic"><use href="#p14"/></svg></button>
        <button class="tool tool-hot" aria-label="注釈ツール"><svg class="ic"><use href="#p15"/></svg></button>
        <button class="tool" aria-label="簡易注釈"><svg class="ic"><use href="#p16"/></svg></button>
        <button class="tool" aria-label="フリーハンド雲"><svg class="ic"><use href="#p17"/></svg></button>
        <button class="tool" aria-label="長方形雲"><svg class="ic"><use href="#p18"/></svg></button>
        <button class="tool" aria-label="楕円雲"><svg class="ic"><use href="#p19"/></svg></button>
        <button class="tool" aria-label="雲"><svg class="ic"><use href="#p20"/></svg></button>
      </div>
      <div class="palette"><i class="vgrip"></i>
        <button class="tool" aria-label="削除"><svg class="ic"><use href="#m1"/></svg></button>
        <button class="tool" aria-label="複写"><svg class="ic"><use href="#m2"/></svg></button>
        <button class="tool" aria-label="鏡像"><svg class="ic"><use href="#m3"/></svg></button>
        <button class="tool" aria-label="移動"><svg class="ic"><use href="#m4"/></svg></button>
        <button class="tool" aria-label="オフセット"><svg class="ic"><use href="#m5"/></svg></button>
        <button class="tool" aria-label="パターン"><svg class="ic"><use href="#m6"/></svg></button>
        <button class="tool" aria-label="回転"><svg class="ic"><use href="#m7"/></svg></button>
        <button class="tool" aria-label="尺度"><svg class="ic"><use href="#m8"/></svg></button>
        <button class="tool" aria-label="ストレッチ"><svg class="ic"><use href="#m9"/></svg></button>
        <button class="tool" aria-label="面取り"><svg class="ic"><use href="#m10"/></svg></button>
        <button class="tool" aria-label="フィレット"><svg class="ic"><use href="#m11"/></svg></button>
        <button class="tool" aria-label="点で分割"><svg class="ic"><use href="#m12"/></svg></button>
        <button class="tool" aria-label="部分削除"><svg class="ic"><use href="#m13"/></svg></button>
        <button class="tool" aria-label="結合"><svg class="ic"><use href="#m14"/></svg></button>
        <button class="tool" aria-label="延長"><svg class="ic"><use href="#m15"/></svg></button>
        <button class="tool" aria-label="トリム"><svg class="ic"><use href="#m16"/></svg></button>
        <button class="tool" aria-label="ハッチング編集"><svg class="ic"><use href="#m17"/></svg></button>
        <button class="tool" aria-label="表示順序"><svg class="ic"><use href="#m18"/></svg></button>
        <button class="tool" aria-label="ポリライン編集"><svg class="ic"><use href="#m19"/></svg></button>
        <button class="tool" aria-label="分解"><svg class="ic"><use href="#m20"/></svg></button>
      </div>

      <div class="content">
        <div class="upper">
          <section class="props">
            <div class="dock-title"><h2>プロパティ</h2><button class="dock-btn" aria-label="フローティング"><svg class="sm"><use href="#nres"/></svg></button><button class="dock-btn" aria-label="プロパティを閉じる"><svg class="sm"><use href="#nx"/></svg></button></div>
            <div class="picker">
              <div class="combo"><select aria-label="選択"><option>選択がありません</option></select><span class="drop"><svg class="sm"><use href="#chev"/></svg></span></div>
              <button class="pick" aria-label="一致選択"><svg class="ic"><use href="#q1"/></svg></button>
              <button class="pick" aria-label="選択"><svg class="ic"><use href="#q2"/></svg></button>
              <button class="pick" aria-label="スマート選択"><svg class="ic"><use href="#q3"/></svg></button>
            </div>
            <div class="prop-box">
              <div class="prop-list">
                <fieldset><legend>一般</legend>
                  <label class="prop"><svg class="ic"><use href="#a1"/></svg><input class="cell" type="text" aria-label="ハイパーリンク" value=""></label>
                  <label class="prop"><svg class="ic"><use href="#layer3"/></svg><span class="combo cell"><select aria-label="画層名"><option>0</option></select><span class="drop"><svg class="sm"><use href="#chev"/></svg></span></span></label>
                  <label class="prop"><svg class="ic"><use href="#a2"/></svg><span class="combo cell"><svg class="ic"><use href="#ring"/></svg><select aria-label="色"><option>ByLayer</option></select><span class="drop"><svg class="sm"><use href="#chev"/></svg></span></span></label>
                  <label class="prop"><svg class="ic"><use href="#a3"/></svg><input class="cell" type="text" aria-label="線種尺度" value="1.0000"></label>
                  <label class="prop"><svg class="ic"><use href="#a4"/></svg><span class="combo cell"><i class="stroke"></i><select aria-label="太さ"><option>ByLayer</option></select><span class="drop"><svg class="sm"><use href="#chev"/></svg></span></span></label>
                  <label class="prop"><svg class="ic"><use href="#a5"/></svg><span class="combo cell"><select aria-label="線のスタイル"><option>ByLayer&nbsp;&nbsp;&nbsp;&nbsp;&nbsp; Solid line</option></select><span class="drop"><svg class="sm"><use href="#chev"/></svg></span></span></label>
                </fieldset>
                <fieldset><legend>印刷スタイル</legend>
                  <label class="prop"><svg class="ic"><use href="#b1"/></svg><span class="combo cell"><select aria-label="印刷スタイルテーブル"><option>monochrome.ctb</option></select><span class="drop"><svg class="sm"><use href="#chev"/></svg></span></span></label>
                  <label class="prop"><svg class="ic"><use href="#b2"/></svg><span class="combo cell off"><select aria-label="印刷スタイル名" disabled><option></option></select><span class="drop"><svg class="sm"><use href="#chev"/></svg></span></span></label>
                  <label class="prop"><svg class="ic"><use href="#b3"/></svg><input class="cell ro" type="text" aria-label="印刷テーブルタイプ" value="なし" readonly></label>
                </fieldset>
                <fieldset><legend>ビュー</legend>
                  <label class="prop"><svg class="ic"><use href="#v1"/></svg><input class="cell ro" type="text" aria-label="中心X" value="210.0000" readonly></label>
                  <label class="prop"><svg class="ic"><use href="#v0"/></svg><input class="cell ro" type="text" aria-label="中心Y" value="148.5000" readonly></label>
                  <label class="prop"><svg class="ic"><use href="#v3"/></svg><input class="cell ro" type="text" aria-label="中心Z" value="" readonly></label>
                  <label class="prop"><svg class="ic"><use href="#v4"/></svg><input class="cell ro" type="text" aria-label="幅" value="511.4779" readonly></label>
                  <label class="prop"><svg class="ic"><use href="#v5"/></svg><input class="cell ro" type="text" aria-label="高さ" value="302.9400" readonly></label>
                </fieldset>
                <fieldset><legend>その他</legend>
                  <label class="prop"><svg class="ic"><use href="#o1"/></svg><span class="combo cell"><select aria-label="CCSアイコン"><option>はい</option></select><span class="drop"><svg class="sm"><use href="#chev"/></svg></span></span></label>
                  <label class="prop"><svg class="ic"><use href="#o2"/></svg><span class="combo cell"><select aria-label="原点にアイコン"><option>はい</option></select><span class="drop"><svg class="sm"><use href="#chev"/></svg></span></span></label>
                  <label class="prop"><svg class="ic"><use href="#o3"/></svg><span class="combo cell"><select aria-label="ビューポートごと"><option>はい</option></select><span class="drop"><svg class="sm"><use href="#chev"/></svg></span></span></label>
                  <label class="prop"><svg class="ic"><use href="#o4"/></svg><input class="cell ro" type="text" aria-label="CCS名" value="" readonly></label>
                </fieldset>
              </div>
              <div class="scroll"><button class="scroll-btn" aria-label="上へ"><svg class="sm"><use href="#chevup"/></svg></button><span class="thumb thumb-long"></span><button class="scroll-btn" aria-label="下へ"><svg class="sm"><use href="#chev"/></svg></button></div>
            </div>
          </section>

          <section class="drawing">
            <svg class="canvas" role="img" aria-label="図面">
              <path d="M86.500 562.500V6.500H873.500V562.500Z" fill="none" stroke="#8a8a8a"/>
              <path d="M104.500 24.500H854.500V544.500H104.500Z" fill="none" stroke="#fff"/>
              <g fill="none" stroke="#fff"><path d="M86.500 484.500V562.500H154M81.500 557.500h10v10h-10zM86.500 562v5M80 478l6.500 6.500L93 478M81 503l5.500-10 5.500 10M145 557l10 5.500-10 5.500M158 557l12 11M170 557l-12 11"/></g>
              <path d="M66.500 390.500h6v6h-6z" fill="none" stroke="#fff"/><path d="M70 395v13l3-3 3 7 2-1-3-7h4z" fill="#fff"/>
            </svg>
            <div class="tabs">
              <button class="tab tab-on"><svg class="tab-shape" viewBox="0 0 50 14" preserveAspectRatio="none"><path d="M0 0L5 11Q6 13.500 9 13.500H41Q44 13.500 45 11L50 0" fill="#fff" stroke="#222"/></svg><span>モデル</span></button>
              <button class="tab"><svg class="tab-shape" viewBox="0 0 50 14" preserveAspectRatio="none"><path d="M0 0L5 10Q6 12.500 9 12.500H41Q44 12.500 45 10L50 0" fill="#dbdee5" stroke="#222"/></svg><span>Sheet1</span></button>
              <button class="tab"><svg class="tab-shape" viewBox="0 0 50 14" preserveAspectRatio="none"><path d="M0 0L5 10Q6 12.500 9 12.500H41Q44 12.500 45 10L50 0" fill="#dbdee5" stroke="#222"/></svg><span>Sheet2</span></button>
            </div>
          </section>
        </div>

        <section class="command">
          <div class="dock-title"><h2>コマンド ウィンドウ</h2><button class="dock-btn" aria-label="コマンドをフローティング"><svg class="sm"><use href="#nres"/></svg></button><button class="dock-btn" aria-label="コマンドを閉じる"><svg class="sm"><use href="#nx"/></svg></button></div>
          <div class="log">
            <div class="log-lines"><p>寸法文字: 2.1991</p><p>: ._MAINSELECT</p><p>反対側のコーナーを指定:</p><p>:</p><p>2 見つかりました, 2 合計</p></div>
            <div class="scroll"><button class="scroll-btn" aria-label="ログを上へ"><svg class="sm"><use href="#chevup"/></svg></button><span class="track"></span><span class="thumb thumb-short"></span><button class="scroll-btn" aria-label="ログを下へ"><svg class="sm"><use href="#chev"/></svg></button></div>
          </div>
          <input class="prompt" type="text" aria-label="コマンド入力" value=":">
        </section>
      </div>
    </main>

    <footer class="status">
      <p class="hint">段落文字エンティティを作成:&nbsp; NOTE</p>
      <div class="modes modes-a"><button class="mode">スナップ</button><button class="mode">グリッド</button><button class="mode">直交</button></div>
      <div class="modes modes-b"><button class="mode mode-on">円形状</button><button class="mode mode-on">Eエンティティスナップ</button><button class="mode">Eエンティティトラック</button></div>
      <p class="coords">(-8.9382,90.3654,0.0000)</p>
      <i class="sep status-sep"></i>
      <svg class="resize" viewBox="0 0 12 12"><path d="M9 1h2v2H9zM5 5h2v2H5zM9 5h2v2H9zM1 9h2v2H1zM5 9h2v2H5zM9 9h2v2H9z" fill="#aaa89c"/></svg>
    </footer>
  </div>

  <svg class="pointer-arrow" viewBox="0 0 137 51"><path d="M0 25L45 0v12h92v26H45v13z" fill="#f00"/></svg>
  <svg class="cursor" viewBox="0 0 13 20"><path d="M.5.5v16l4-4 3 7 3-1-3-7h5z" fill="#fff" stroke="#000"/></svg>
  <span class="tooltip" role="tooltip">注釈</span>
</div>
</body>
</html>
```

FILE: styles.css
```css
* { box-sizing: border-box; }

:root {
  --face: #dbdee5;
  --edge: #6b6785;
  --line: #a0a1a6;
  --field: #a0a9ad;
  --blue: #7f9db9;
}

body {
  margin: 0;
  background: #fff;
  color: #000;
  font: 11px/14px "Liberation Sans", "Noto Sans CJK JP", sans-serif;
  font-feature-settings: "palt";
}

button, input, select {
  font: inherit;
  font-feature-settings: inherit;
  color: inherit;
  margin: 0;
  padding: 0;
  border: 0;
  border-radius: 0;
  background: none;
}

select { appearance: none; }
h1, h2, p { margin: 0; font: inherit; }
svg { display: block; flex: none; }
.sprite { position: absolute; width: 0; height: 0; }
.ic { width: 18px; height: 18px; }
.sm { width: 10px; height: 10px; }
.spacer { flex: 1; }

.window {
  position: relative;
  display: flex;
  flex-direction: column;
  height: 100vh;
  border: 1px solid var(--edge);
  border-top-width: 2px;
  border-radius: 7px 7px 0 0;
  background: #f4f4fa;
  overflow: hidden;
}

.titlebar {
  display: flex;
  align-items: center;
  gap: 2px;
  height: 27px;
  flex: none;
  padding: 2px 4px 0 5px;
  background: linear-gradient(#fff 0 1px, #a6a5bf 2px, #b4b4c8 11px, #d4d4e0 17px, #fff 24px);
}

.title {
  flex: 1;
  font: bold 13px/18px "Liberation Sans", "Noto Sans CJK JP", sans-serif;
  white-space: nowrap;
}

.win-btn {
  display: grid;
  place-items: center;
  width: 21px;
  height: 21px;
  border: 1px solid #60658e;
  border-radius: 3px;
  box-shadow: inset 0 0 0 1px #fff;
  background: linear-gradient(135deg, #fff, #a5a8c6);
}

.win-close { background: linear-gradient(135deg, #f0a0a0, #cf3e3e); border-color: #a33; box-shadow: inset 0 0 0 1px #fbb; }

.frame {
  flex: 1;
  min-height: 0;
  display: flex;
  flex-direction: column;
  margin: 0 2px 2px;
  border: 1px solid var(--edge);
  background: var(--face);
}

.menubar {
  display: flex;
  align-items: center;
  flex: none;
  height: 20px;
  background: #e0e1ee;
  border-bottom: 1px solid #a4a4b0;
}

.menu-logo { width: 16px; height: 16px; }
.menu { padding: 0 8px; line-height: 18px; white-space: nowrap; }

.mdi-btn {
  display: grid;
  place-items: center;
  width: 17px;
  height: 17px;
  margin-right: 1px;
  background: #eeeeea;
  color: #716f64;
  box-shadow: 1px 1px 0 #cfcfc8;
}

.toolrow {
  display: flex;
  flex: none;
  height: 30px;
  border-top: 1px solid #fff;
  border-bottom: 1px solid var(--line);
}

.toolbar {
  display: flex;
  align-items: center;
  border-left: 1px solid #fff;
  border-right: 1px solid var(--line);
}

.toolbar:first-child { border-left: 0; }
.toolbar:last-child { border-right: 0; }

.grip {
  width: 3px;
  height: 18px;
  margin: 0 3px;
  background: repeating-linear-gradient(#a3a5ac 0 2px, #f8f8fa 2px 3px, transparent 3px 4px);
}

.tool {
  display: grid;
  place-items: center;
  flex: none;
  width: 27px;
  height: 26px;
}

.sep {
  flex: none;
  width: 2px;
  height: 22px;
  margin: 0 2px;
  background: linear-gradient(90deg, #b6b8bd 1px, #eceef2 1px);
}

.combo {
  display: flex;
  align-items: center;
  height: 20px;
  padding-left: 2px;
  border: 1px solid var(--field);
  background: #fff;
}

.combo select { flex: 1; min-width: 0; height: 18px; opacity: 1; }
.combo-layer { width: 301px; }
.combo-layer select { padding-left: 4px; font-size: 12px; }
.combo-layer .ic { margin-right: 2px; }
.combo-style { width: 132px; }
.combo .ic + select, .stroke + select { padding-left: 2px; }
.stroke { width: 32px; height: 1px; margin: 0 1px; background: #000; }

.drop {
  display: grid;
  place-items: center;
  flex: none;
  width: 16px;
  height: 18px;
  border: 1px solid #989aa8;
  border-radius: 2px;
  box-shadow: inset 0 0 0 1px #fff;
  background: linear-gradient(#fbfbfd, #c9cad6);
  pointer-events: none;
}

.workspace { flex: 1; display: flex; min-height: 0; }

.palette {
  display: flex;
  flex-direction: column;
  align-items: center;
  flex: none;
  width: 31px;
  padding: 4px 1px 0 0;
  border-right: 1px solid var(--line);
  box-shadow: inset 1px 0 #fff;
  border-bottom: 1px solid var(--line);
}

.vgrip {
  flex: none;
  width: 19px;
  height: 3px;
  margin-bottom: 3px;
  background: repeating-linear-gradient(90deg, #a3a5ac 0 2px, #f8f8fa 2px 3px, transparent 3px 4px);
}

.palette .tool { width: 25px; }
.tool-hot { border: 1px solid #c8c6bc; border-radius: 3px; background: #f6f6f2; }

.content { flex: 1; min-width: 0; display: flex; flex-direction: column; }
.upper { flex: 1; min-height: 0; display: flex; }

.props {
  flex: none;
  display: flex;
  flex-direction: column;
  width: 315px;
  padding: 1px 2px 11px 0;
}

.dock-title {
  display: flex;
  align-items: center;
  flex: none;
  height: 17px;
  padding-left: 2px;
  border: 1px solid var(--line);
}

.dock-title h2 { flex: 1; }
.dock-btn { display: grid; place-items: center; width: 15px; height: 15px; }

.picker { display: flex; gap: 8px; padding: 14px 12px 7px 11px; }
.picker .combo { flex: 1; height: 20px; }
.pick {
  display: grid;
  place-items: center;
  width: 21px;
  height: 20px;
  border: 1px solid #1c4f86;
  border-radius: 3px;
  background: linear-gradient(#fff, #d4d5e0);
}
.pick .ic { width: 16px; height: 16px; }

.prop-box {
  flex: 1;
  min-height: 0;
  display: flex;
  margin: 0 10px 0 11px;
  border: 1px solid var(--blue);
  overflow: hidden;
}

.prop-list { flex: 1; min-width: 0; padding: 9px 10px 0 9px; }
.prop-box .scroll { margin-right: 1px; }

fieldset {
  min-width: 0;
  margin: 0 0 6px;
  padding: 10px 9px 9px 8px;
  border: 1px solid #b8b5bb;
  border-radius: 4px;
}

legend { padding: 0 2px; margin-left: -2px; line-height: 12px; color: #0046d5; }

.prop { display: flex; align-items: center; gap: 11px; height: 20px; padding-left: 2px; }
.cell { flex: 1; min-width: 0; height: 20px; padding-left: 2px; border: 1px solid var(--field); background: #fff; }
.ro { background: #eeeee6; }
.off { background: var(--face); }
.off .drop { opacity: .45; }

.scroll { display: flex; flex-direction: column; flex: none; width: 16px; background: linear-gradient(90deg, #eeedf6, #fafcfd); }

.scroll-btn {
  display: grid;
  place-items: center;
  flex: none;
  width: 16px;
  height: 17px;
  border: 1px solid #989aa8;
  border-radius: 2px;
  box-shadow: inset 0 0 0 1px #fff;
  background: linear-gradient(#fbfbfd, #c9cad6);
}

.thumb {
  display: block;
  border: 1px solid #989aa8;
  border-radius: 2px;
  box-shadow: inset 0 0 0 1px #fff;
  background: linear-gradient(90deg, #f3f3f6 40%, #c9cad8);
}

.thumb-long {
  flex: 1;
  margin-bottom: 14px;
  background:
    repeating-linear-gradient(#8d90a0 0 1px, #fff 1px 2px) center / 6px 8px no-repeat,
    linear-gradient(90deg, #f3f3f6 40%, #c9cad8);
}
.track { flex: 1; }
.thumb-short { height: 9px; }

.drawing {
  flex: 1;
  min-width: 0;
  display: flex;
  flex-direction: column;
  border-left: 2px solid #8a8b90;
}

.canvas { flex: 1; width: 100%; min-height: 0; background: #000; }
.tabs { display: flex; flex: none; gap: 3px; height: 14px; padding-left: 1px; }
.tab { position: relative; min-width: 56px; height: 14px; line-height: 13px; }
.tab-on { min-width: 50px; }
.tab span { position: relative; }
.tab-shape { position: absolute; left: 0; top: 0; width: 100%; height: 14px; }

.command {
  flex: none;
  padding-top: 3px;
  border-top: 2px solid #87888c;
  box-shadow: inset 0 1px #fff;
}

.log { display: flex; height: 88px; margin-top: 2px; border: 1px solid var(--blue); background: #fff; }
.log-lines { flex: 1; padding: 3px 4px; font-size: 12px; line-height: 16px; }

.prompt { display: block; width: 100%; height: 16px; padding-left: 5px; background: #fff; font-size: 12px; }

.status { display: flex; align-items: center; flex: none; height: 25px; }
.hint { width: 443px; padding-left: 2px; white-space: nowrap; }

.modes {
  display: flex;
  align-items: center;
  justify-content: space-between;
  height: 20px;
  margin-right: 5px;
  padding: 0 2px;
  border: 1px solid #b8b9be;
}

.modes-a { width: 153px; }
.modes-b { width: 275px; }

.mode {
  height: 16px;
  padding: 0 5px;
  border: 1px solid #1c4f86;
  border-radius: 3px;
  background: linear-gradient(#fff, #d4d5e0);
  font-size: 10px;
  line-height: 14px;
  white-space: nowrap;
}

.mode-on { background: linear-gradient(#bfc0cf, #e6e6ee); }
.coords { flex: 1; padding-left: 2px; }
.status-sep { height: 18px; margin-right: 4px; }
.resize { width: 12px; height: 12px; margin: 8px 1px 0 0; }

.pointer-arrow { position: absolute; left: 59px; top: 503px; width: 137px; height: 51px; }
.cursor { position: absolute; left: 24px; top: 531px; width: 13px; height: 20px; }
.tooltip {
  position: absolute;
  left: 32px;
  top: 552px;
  padding: 0 2px;
  border: 1px solid #000;
  background: #ffffe1;
  font-size: 12px;
  line-height: 15px;
}
```
